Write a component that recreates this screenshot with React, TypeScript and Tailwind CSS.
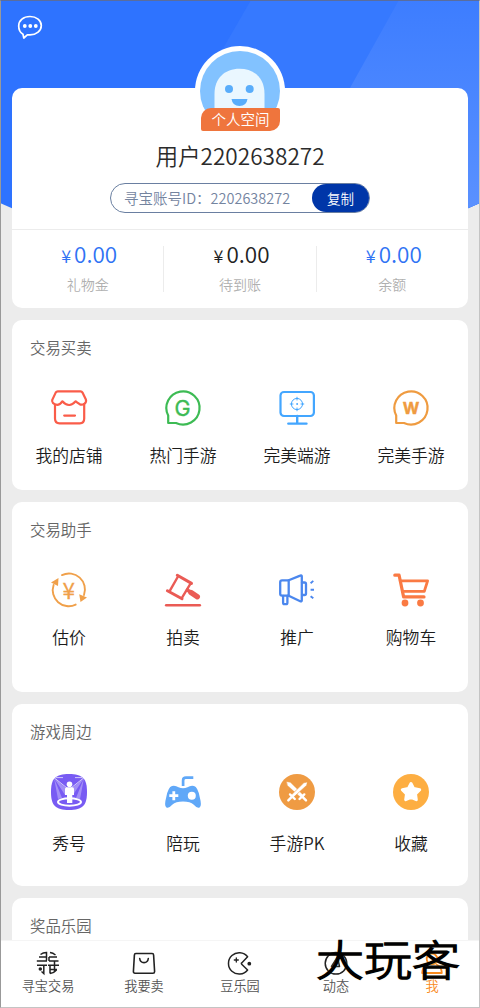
import type { ReactNode } from "react";

type Item = { label: string; icon: ReactNode };

const svgClass = "h-9 w-9 overflow-visible";
const line = { fill: "none", strokeLinecap: "round", strokeLinejoin: "round" } as const;
const bubble = "M3.2 25.5A16.6 16.6 0 1 1 11 33H3.2Z";

const ShopIcon = () => (
  <svg viewBox="0 0 36 36" className={svgClass} {...line} stroke="#fa5c49" strokeWidth="2.2">
    <path d="M6.8 1.3H29.6C30.6 1.3 31 1.7 31.5 2.6L34.9 9.6C36 13 31.5 16.3 28.2 13.8Q26.2 12.8 24.7 11.3Q21.2 15.2 18 15Q14.5 15 11.3 11.3Q9 14.8 6.2 14.8C2.5 14.8 .2 12 1.4 9.6L4.7 2.6Q5.4 1.3 6.8 1.3Z" />
    <path d="M4 15V28.6Q4 33.4 8.5 33.4H28.8Q33.2 33.4 33.2 28.6V14M13.2 25.6H24" />
  </svg>
);
const GIcon = () => (
  <svg viewBox="0 0 36 36" className={svgClass}>
    <path d={bubble} {...line} stroke="#3dbb54" strokeWidth="2.2" />
    <text x="17.6" y="25.8" textAnchor="middle" fontFamily="Inter, sans-serif" fontSize="21.5" fontWeight="400" fill="#3dbb54" stroke="#3dbb54" strokeWidth=".4">G</text>
  </svg>
);
const MonitorIcon = () => (
  <svg viewBox="0 0 36 36" className={svgClass} {...line} stroke="#43a6ff">
    <rect x="1.5" y="2" width="33.4" height="24" rx="3.5" strokeWidth="2.2" />
    <path d="M18.2 26V33.5M9.3 33.6H27.5" strokeWidth="2.4" />
    <circle cx="18" cy="14" r="5.6" strokeWidth="1" />
    <path d="M18 7.2V10M18 18V20.8M11.2 14H14M22 14H24.8" strokeWidth="1" />
    <circle cx="18" cy="14" r=".5" />
  </svg>
);
const WIcon = () => (
  <svg viewBox="0 0 36 36" className={svgClass}>
    <path d={bubble} {...line} stroke="#ef9b40" strokeWidth="2.2" />
    <text x="18" y="24.300" textAnchor="middle" fontFamily="Inter, sans-serif" fontSize="16" fontWeight="700" fill="#ef9b40" stroke="#ef9b40" strokeWidth=".4">W</text>
  </svg>
);
const ValueIcon = () => (
  <svg viewBox="0 0 36 36" className={svgClass}>
    <g {...line} stroke="#f0a04a" strokeWidth="1.9">
      <path d="M11 3.1A16 16 0 0 1 33 23" />
      <path d="M24.7 32.6A16 16 0 0 1 2.6 13" />
    </g>
    <path d="M0 10.4L7.5 6L7 14ZM28.2 22.2L36 25.4L29.5 30Z" fill="#f0a04a" />
    <text x="17.7" y="26.500" textAnchor="middle" fontFamily="Noto Sans CJK SC, sans-serif" fontSize="22.500" fontWeight="400" fill="#f0a04a" stroke="#f0a04a" strokeWidth=".3">¥</text>
  </svg>
);
const GavelIcon = () => (
  <svg viewBox="0 0 36 36" className={svgClass} {...line} stroke="#ea5b55">
    <path d="M12.3 3.2L26.5 11.4M2.4 18.7L17 26.8" strokeWidth="3" />
    <path d="M13 4.5L5.2 18.2M25.2 12.2L17.2 25.3" strokeWidth="2.4" />
    <path d="M22.4 18L26 20.500" strokeWidth="3.400" />
    <path d="M26 20.500L32.3 24.700" strokeWidth="5.400" />
    <path d="M1.2 33.3H34.8" strokeWidth="2.6" />
  </svg>
);
const HornIcon = () => (
  <svg viewBox="0 0 36 36" className={svgClass} {...line} stroke="#4b87ee" strokeWidth="2.3">
    <path d="M9.7 8.300H3Q1.2 8.300 1.2 10.200V21.8Q1.2 23.7 3 23.7H9.7L21.2 29.2Q22.8 30 22.8 28.2V4.600Q22.8 2.800 21.2 3.600Z" />
    <path d="M9.7 8.300V23.7M23 10.500H25.5Q27 10.500 27 12V21.5Q27 23 25.5 23H23M4.1 24V30.8Q4.1 32.2 5.5 32.2H7Q8.4 32.2 8.4 30.8V24" />
    <path d="M31.6 11.2L34.300 8.900M31.6 17.7H35M31.6 24.2L34.300 26.300" strokeWidth="1.900" strokeLinecap="butt" />
  </svg>
);
const CartIcon = () => (
  <svg viewBox="0 0 36 36" className={svgClass} {...line} stroke="#fa7a43" strokeWidth="2.8">
    <path d="M1.8 3.2H6.1L10.6 24.9H31" strokeWidth="3.2" />
    <path d="M7.2 8.8H34.6L31.3 19.3H9.7" />
    <circle cx="12" cy="31" r="3.4" fill="#fa7a43" stroke="none" />
    <circle cx="27.5" cy="31" r="3.4" fill="#fa7a43" stroke="none" />
  </svg>
);
const ShowIcon = () => (
  <svg viewBox="0 0 36 36" className={svgClass}>
    <path d="M18 0C31.5 0 36 4.5 36 18S31.5 36 18 36S0 31.5 0 18S4.500 0 18 0Z" fill="#785bf3" />
    <path d="M3 4L16 15L14 21ZM3 4L11 24L7 25ZM33 4L20 15L22 21ZM33 4L25 24L29 25Z" fill="#fff" opacity=".32" />
    <path d="M3.500 4L16 14M32.500 4L20 14M5 3.600H12M24 3.600H31" stroke="#fff" strokeWidth=".9" opacity=".75" />
    <ellipse cx="18.500" cy="28" rx="11.500" ry="3.700" fill="none" stroke="#fff" strokeWidth="2" />
    <circle cx="18.500" cy="10.300" r="2.800" fill="#fff" />
    <path d="M15.500 13.300H21.500Q23 13.300 23 15V21H21.300V29H16V21H14V15Q14 13.300 15.500 13.300Z" fill="#fff" />
  </svg>
);
const PadIcon = () => (
  <svg viewBox="0 0 36 36" className={svgClass}>
    <path d="M18.100 12V6.500Q18.100 3.700 21 3.700H28.300" fill="none" stroke="#60a8f8" strokeWidth="2.700" />
    <path d="M7 12Q10.500 11.200 13.500 13.300Q18 15.300 22.500 13.300Q25.500 11.200 29 12Q32.800 13 34.700 23Q37 31.500 34.800 33.200Q32.500 35 28.500 30.500Q25.500 27.600 18 27.600T7.500 30.500Q3.500 35 1.200 33.200Q-1 31.500 1.300 23Q3.200 13 7 12Z" fill="#60a8f8" />
    <path d="M8.800 17.200V26.200M4.300 21.700H13.300" stroke="#fff" strokeWidth="2.800" />
    <circle cx="26.800" cy="21.700" r="4" fill="#fff" />
  </svg>
);
const SwordsIcon = () => (
  <svg viewBox="0 0 36 36" className={svgClass}>
    <circle cx="18" cy="18" r="18" fill="#ef9b43" />
    <g fill="#fff" stroke="#fff" strokeLinecap="round">
      <path d="M8 8L11.500 8.800L24.600 21.800L22.500 23.800L8.800 11.500Z" strokeWidth=".3" />
      <path d="M20.500 25L25.300 20.400M24 23.300L27 26.400" strokeWidth="2.400" />
      <path d="M28.300 8L24.800 8.800L11.500 21.800L13.700 24L27.500 11.500Z" stroke="#ef9b43" strokeWidth=".6" />
      <path d="M15.800 25L11 20.400M12.300 23.300L9.300 26.400" strokeWidth="2.400" />
    </g>
  </svg>
);
const StarIcon = () => (
  <svg viewBox="0 0 36 36" className={svgClass}>
    <circle cx="18" cy="18" r="18" fill="#fdae42" />
    <path d="M18 9.500L20.700 14.600L26.700 15.700L22.500 20L23.300 25.700L18 23.300L12.700 25.700L13.500 20L9.300 15.700L15.300 14.600Z" fill="#fff" stroke="#fff" strokeWidth="3" strokeLinejoin="round" />
  </svg>
);

const trade: Item[] = [
  { label: "我的店铺", icon: <ShopIcon /> },
  { label: "热门手游", icon: <GIcon /> },
  { label: "完美端游", icon: <MonitorIcon /> },
  { label: "完美手游", icon: <WIcon /> },
];
const helper: Item[] = [
  { label: "估价", icon: <ValueIcon /> },
  { label: "拍卖", icon: <GavelIcon /> },
  { label: "推广", icon: <HornIcon /> },
  { label: "购物车", icon: <CartIcon /> },
];
const around: Item[] = [
  { label: "秀号", icon: <ShowIcon /> },
  { label: "陪玩", icon: <PadIcon /> },
  { label: "手游PK", icon: <SwordsIcon /> },
  { label: "收藏", icon: <StarIcon /> },
];

function Section({ title, items, className, labelClass }: { title: string; items: Item[]; className: string; labelClass: string }) {
  return (
    <section className={`w-[456px] shrink-0 rounded-[10px] bg-white ${className}`}>
      <h2 className="pt-[15px] pl-[18px] text-[15.4px] leading-6 text-[#666]">{title}</h2>
      <div className="mt-[31px] grid grid-cols-4">
        {items.map((it) => (
          <div key={it.label} className="flex flex-col items-center">
            {it.icon}
            <span className={`text-[16.8px] leading-6 text-[#1c1c1c] ${labelClass}`}>{it.label}</span>
          </div>
        ))}
      </div>
    </section>
  );
}

function Balance({ value, label, color, divided }: { value: string; label: string; color: string; divided?: boolean }) {
  return (
    <div className={`flex h-[46px] flex-1 flex-col items-center ${divided ? "border-r border-[#ececec]" : ""}`}>
      <div className={`-mt-[3px] flex items-baseline pl-[3px] text-[22.500px] leading-5 ${color}`}>
        <span className="mr-[3px] text-[18px]">¥</span>
        {value}
      </div>
      <div className="mt-[9px] text-[14px] leading-5 text-[#b0b0b0]">{label}</div>
    </div>
  );
}

const nav = "h-6 w-6 overflow-visible";
const tabs: Item[] = [
  {
    label: "寻宝交易",
    icon: (
      <svg viewBox="0 0 24 24" className={nav} fill="none" stroke="#222" strokeWidth="1.500">
        <path d="M4.500 3.500Q7 1.600 10.500 1.600V9.500M3 6H10.500M.8 10H11M1 14.300H11M7.800 14V22.500L5.500 20.500" />
        <path d="M14 1.600Q17 2 19.500 4M13 6H21M13 10V6M13 10H22.500M12 14.300H23M14 14V22.500M18.500 10V20M14 18.500H21M14 22.500Q18 22 20.500 19" />
        <circle cx="4.300" cy="18" r="1" fill="#222" />
      </svg>
    ),
  },
  {
    label: "我要卖",
    icon: (
      <svg viewBox="0 0 24 24" className={nav} {...line} stroke="#222" strokeWidth="1.600">
        <path d="M3.800 2.500H20.200Q21.500 2.500 21.600 4L22.600 20.500Q22.600 22.200 21 22.200H3Q1.400 22.200 1.400 20.500L2.400 4Q2.500 2.500 3.800 2.500Z" />
        <path d="M7.700 7.500Q8.200 11.600 12 11.600T16.300 7.500" />
      </svg>
    ),
  },
  {
    label: "豆乐园",
    icon: (
      <svg viewBox="0 0 24 24" className={nav} {...line} stroke="#222" strokeWidth="1.500">
        <path d="M19.600 5.800A10.700 10.700 0 1 0 19.600 19L13.700 13.200Q13 12.500 13.700 11.900Z" />
        <path d="M8.300 7V11M6.300 9H10.300" strokeWidth="1.300" />
        <circle cx="21.300" cy="12.700" r="1.900" fill="#222" stroke="none" />
      </svg>
    ),
  },
  {
    label: "动态",
    icon: (
      <svg viewBox="0 0 24 24" className={nav} {...line} stroke="#222" strokeWidth="1.500">
        <circle cx="12" cy="12.300" r="10.800" />
        <path d="M13.500 6L7.500 15.500H15.500Z" />
      </svg>
    ),
  },
  {
    label: "我",
    icon: (
      <svg viewBox="0 0 24 24" className={nav} {...line} stroke="#f98a1c" strokeWidth="1.800">
        <circle cx="12" cy="8" r="5.300" />
        <path d="M7.500 13.500Q2.500 15.500 2.200 22H21.800Q21.500 15.500 16.500 13.500" />
      </svg>
    ),
  },
];

export default function App() {
  return (
    <div className="relative flex h-[1008px] w-[480px] flex-col overflow-hidden bg-[#ececec] font-['Noto_Sans_CJK_SC',sans-serif] font-[350]">
      <svg viewBox="0 0 480 210" className="absolute top-0 left-0 h-[210px] w-[480px]" aria-hidden="true">
        <defs>
          <linearGradient id="glow" x1="0" y1="0" x2="0" y2="1">
            <stop offset="0" stopColor="#3d7dff" />
            <stop offset="1" stopColor="#5a91ff" />
          </linearGradient>
        </defs>
        <path d="M0 0H480V203L464 210H16L0 203Z" fill="#2e73ff" />
        <path d="M251 0H480V203L464 210H130Z" fill="#3679ff" />
        <path d="M399 0H480V203L464 210H282Z" fill="url(#glow)" />
      </svg>

      <main className="relative flex min-h-0 flex-1 flex-col items-center overflow-hidden">
        <header className="h-[88px] w-full shrink-0 pt-[14px] pl-[17px]">
          <svg viewBox="0 0 26 26" className="h-[26px] w-[26px]" {...line} stroke="#fff" strokeWidth="1.700">
            <path d="M6 20.300C2.800 18.400 1.700 15.500 1.700 12C1.700 6.500 6.500 2.500 13 2.500S24.300 6.300 24.300 11.500S19.500 20.800 13 20.800H10.300L6.800 24Z" />
            <g fill="#fff" stroke="none">
              <circle cx="7.800" cy="12" r="1.900" />
              <circle cx="13.300" cy="12" r="1.900" />
              <circle cx="18.800" cy="12" r="1.900" />
            </g>
          </svg>
        </header>

        <section className="mb-3 flex h-[220px] w-[456px] shrink-0 flex-col items-center rounded-[10px] bg-white">
          <div className="relative -mt-[42px] h-[90px] w-[90px] shrink-0 rounded-full bg-white p-[5px]">
            <div className="h-20 w-20 overflow-hidden rounded-full bg-[#82c2ff]">
              <svg viewBox="0 0 80 80" className="h-20 w-20">
                <path d="M14.500 80V43C14.500 27 25 17.700 39.500 17.700S64.500 27 64.500 43V80Z" fill="#eaf7ff" />
                <circle cx="29" cy="38" r="4" fill="#59adfb" />
                <circle cx="49.700" cy="38" r="4" fill="#59adfb" />
                <path d="M31.500 48H47.500Q46.500 55 39.500 55T31.500 48Z" fill="#59adfb" />
              </svg>
            </div>
            <div className="absolute top-[62px] left-[6px] flex h-[23px] w-[79px] items-center justify-center rounded-tl-[10px] rounded-tr-[2px] rounded-br-[10px] rounded-bl-[2px] bg-[#ef753d] pb-[2px] text-[14.500px] leading-5 text-white">个人空间</div>
          </div>
          <h1 className="mt-[5px] mb-[2px] text-[22.600px] leading-[30px] text-[#2b2b2b]">用户2202638272</h1>
          <div className="mt-[10px] flex h-[30px] w-[260px] items-center justify-between rounded-full border-[1.500px] border-[#6a7fa1] pl-[13px]">
            <span className="text-[14.500px] whitespace-nowrap text-[#74849f]">寻宝账号ID：2202638272</span>
            <button className="h-7 w-[57px] shrink-0 rounded-full bg-[#0036a8] text-[13.500px] leading-7 text-white">复制</button>
          </div>
          <div className="mt-4 flex w-full border-t border-[#ececec] pt-4">
            <Balance value="0.00" label="礼物金" color="text-[#2f72f4]" divided />
            <Balance value="0.00" label="待到账" color="text-[#222]" divided />
            <Balance value="0.00" label="余额" color="text-[#2f72f4]" />
          </div>
        </section>

        <Section title="交易买卖" items={trade} className="mb-3 h-[170px]" labelClass="mt-[17px]" />
        <Section title="交易助手" items={helper} className="mb-3 h-[190px]" labelClass="mt-[17px]" />
        <Section title="游戏周边" items={around} className="mb-3 h-[182px]" labelClass="mt-[21px]" />
        <Section title="奖品乐园" items={[]} className="h-[120px]" labelClass="" />
      </main>

      <nav className="relative grid h-[68px] shrink-0 grid-cols-5 border-t border-[#f5f5f5] bg-white pt-[10px]">
        {tabs.map((t) => (
          <div key={t.label} className="flex flex-col items-center">
            {t.icon}
            <span className={`mt-px text-[13.200px] leading-5 ${t.label === "我" ? "text-[#f98a1c]" : "text-[#555]"}`}>{t.label}</span>
          </div>
        ))}
      </nav>
      <div className="absolute top-[930px] left-[316px] origin-center scale-y-[.88] text-[48px] leading-[56px] font-light whitespace-nowrap text-black [text-shadow:0_0_2px_#d9c98c] [-webkit-text-stroke:1.500px_#000]">大玩客</div>
      <div className="pointer-events-none absolute inset-0 border border-t-[#5a6d9d] border-r-[#c4c4c4] border-b-[#c4c4c4] border-l-[#999]" />
    </div>
  );
}
